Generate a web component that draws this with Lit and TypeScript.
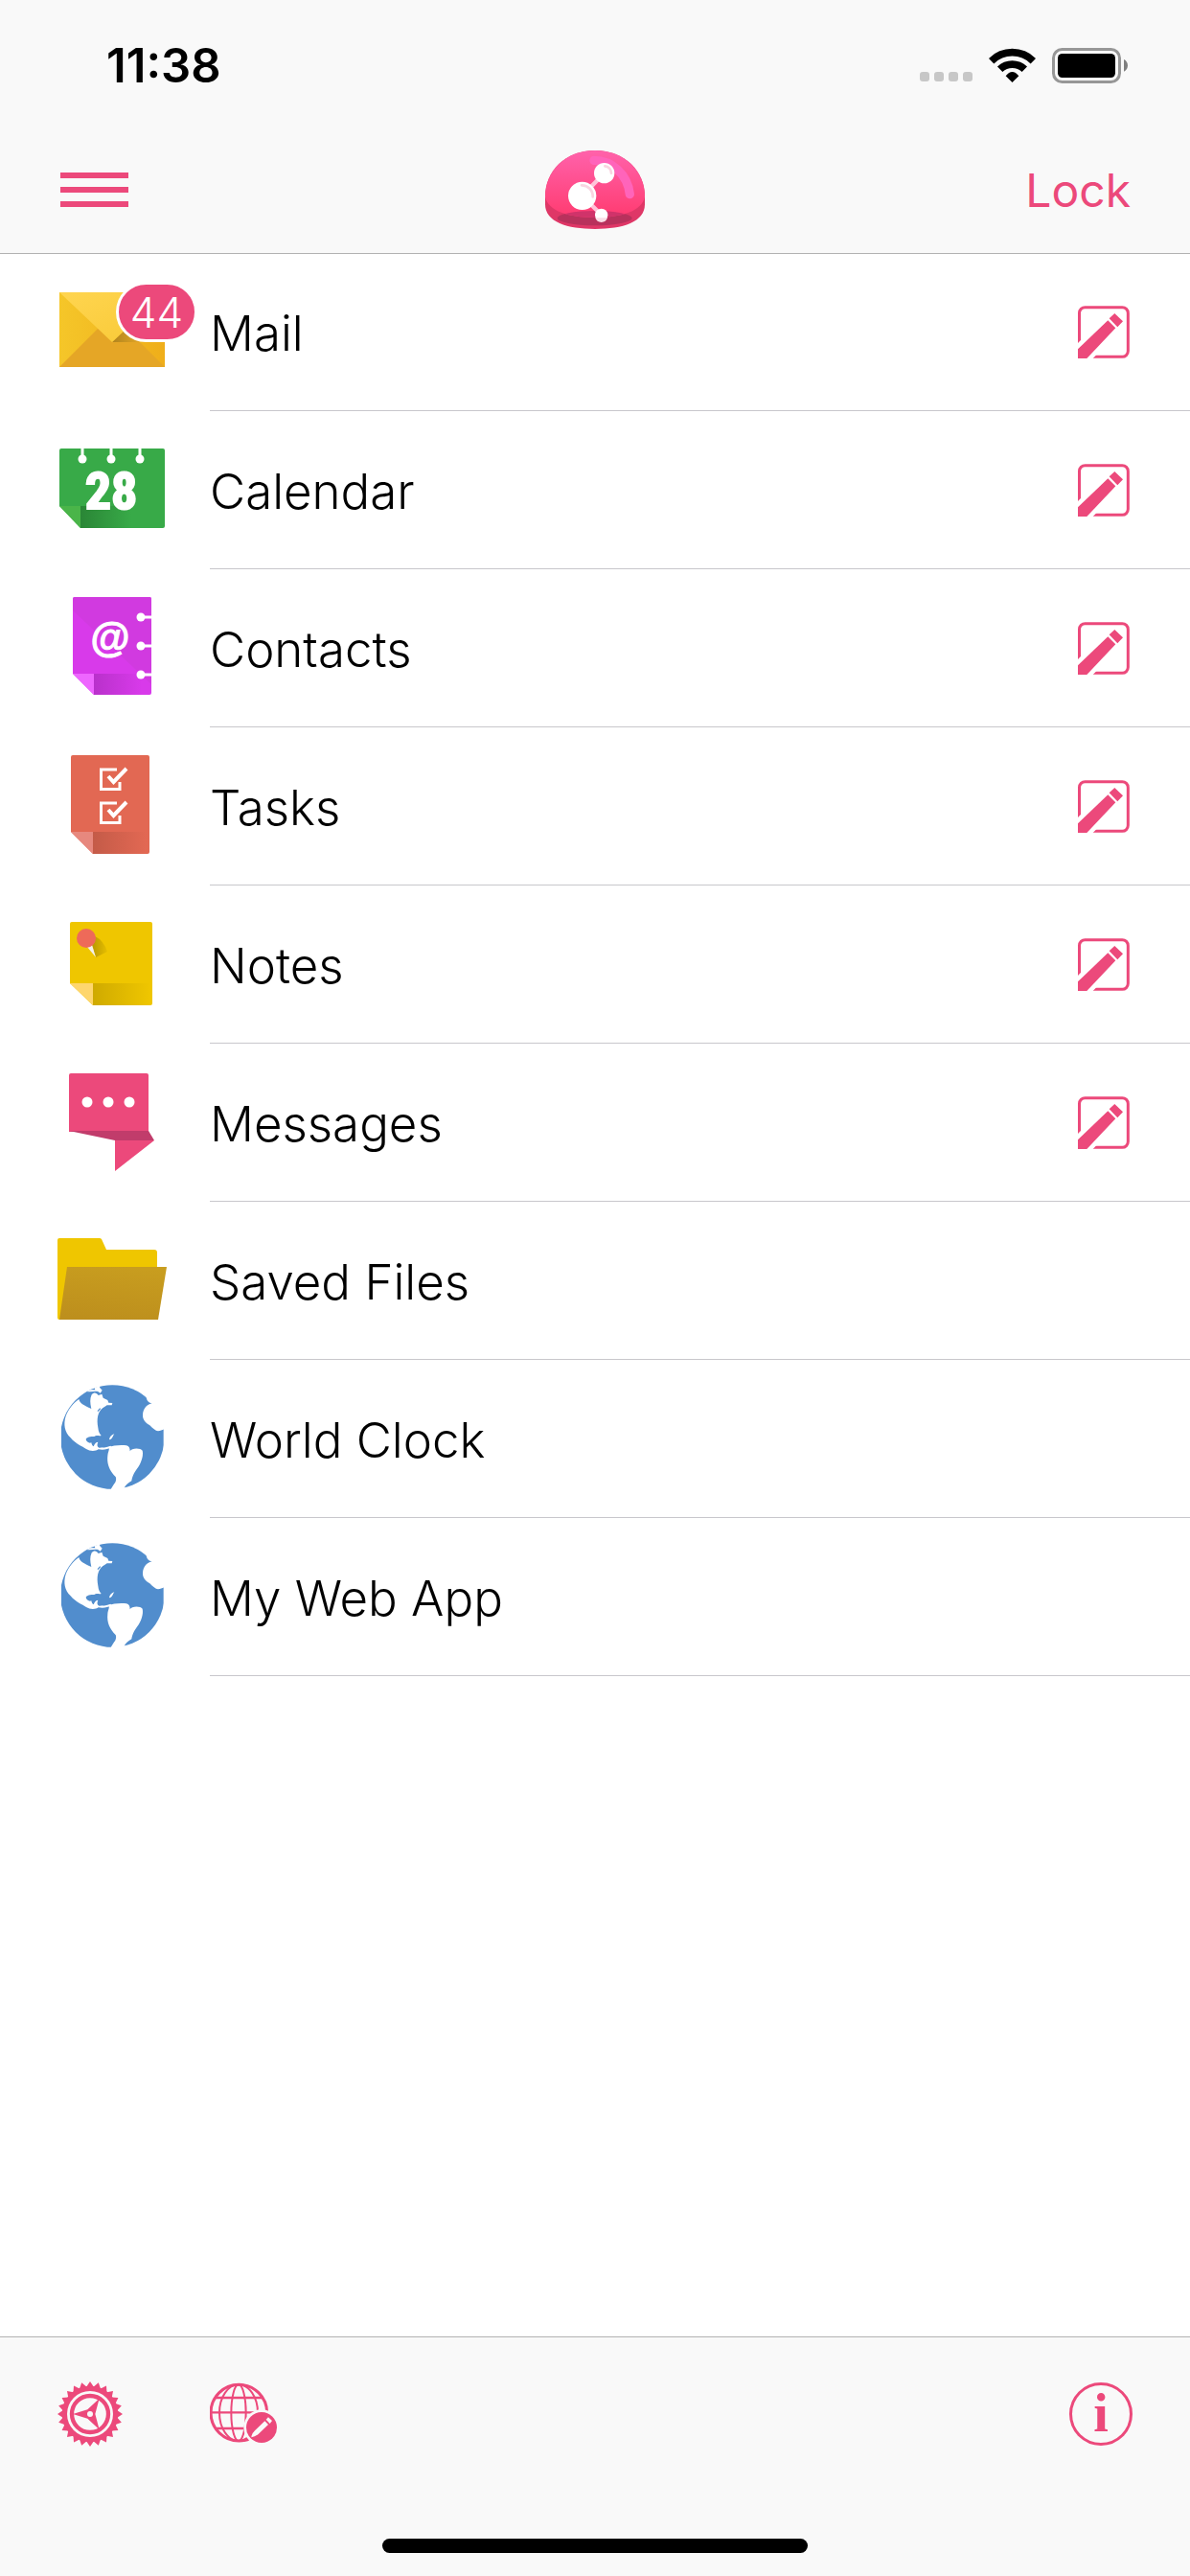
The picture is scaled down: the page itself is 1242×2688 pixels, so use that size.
import { LitElement, html, css, svg, nothing } from 'lit';
import type { SVGTemplateResult } from 'lit';
import { customElement, property } from 'lit/decorators.js';

interface AppEntry {
  id: string;
  label: string;
  icon: string;
  badge?: number;
  compose?: boolean;
}

const APPS: AppEntry[] = [
  { id: 'mail', label: 'Mail', icon: 'mail', badge: 44, compose: true },
  { id: 'calendar', label: 'Calendar', icon: 'calendar', compose: true },
  { id: 'contacts', label: 'Contacts', icon: 'contacts', compose: true },
  { id: 'tasks', label: 'Tasks', icon: 'tasks', compose: true },
  { id: 'notes', label: 'Notes', icon: 'notes', compose: true },
  { id: 'messages', label: 'Messages', icon: 'messages', compose: true },
  { id: 'files', label: 'Saved Files', icon: 'files' },
  { id: 'clock', label: 'World Clock', icon: 'globe' },
  { id: 'webapp', label: 'My Web App', icon: 'globe' },
];

const checkbox = svg`
  <path d="M64 22H47.5V42.5H67V35" fill="none" stroke="#fff" stroke-width="3"/>
  <path d="M55 29l5.5 6L74 21" fill="none" stroke="#fff" stroke-width="4"/>
`;

// all drawn on a 120x120 canvas
const ICONS: Record<string, SVGTemplateResult> = {
  mail: svg`
    <defs>
      <linearGradient id="side"><stop stop-color="#f5c629"/><stop offset="1" stop-color="#efae1a"/></linearGradient>
      <linearGradient id="flap" x2="1" y2="1"><stop stop-color="#ffd550"/><stop offset="1" stop-color="#f8c935"/></linearGradient>
      <linearGradient id="fold"><stop stop-color="#b0841d"/><stop offset="1" stop-color="#e2a526"/></linearGradient>
    </defs>
    <path d="M4 19h110v78H4z" fill="url(#side)"/>
    <path d="M4 97l55-55 55 55z" fill="#e5a626"/>
    <path d="M59 71l16-15 13 15z" fill="url(#fold)"/>
    <path d="M4 19h110L59 71z" fill="url(#flap)"/>
  `,
  calendar: svg`
    <defs>
      <linearGradient id="shade"><stop stop-color="#2a8636"/><stop offset="1" stop-color="#38aa48"/></linearGradient>
    </defs>
    <path d="M6 17h106a2 2 0 0 1 2 2v79a2 2 0 0 1-2 2H26L4 77V19a2 2 0 0 1 2-2z" fill="#38aa48"/>
    <path d="M26 77h53v23H26z" fill="url(#shade)"/>
    <path d="M4 77h22v23z" fill="#4ab549"/>
    <path d="M28 17v10M58 17v10M88 17v10" stroke="#fff" stroke-width="3"/>
    <g fill="#fff"><circle cx="28" cy="28" r="4.5"/><circle cx="58" cy="28" r="4.5"/><circle cx="88" cy="28" r="4.5"/></g>
    <text class="day" x="58" y="80" text-anchor="middle" fill="#fff" stroke="#fff" stroke-width="2">28</text>
  `,
  contacts: svg`
    <defs>
      <linearGradient id="shade"><stop stop-color="#b931cb"/><stop offset="1" stop-color="#d83aea"/></linearGradient>
    </defs>
    <path d="M20 7h78a2 2 0 0 1 2 2v98a2 2 0 0 1-2 2H40L18 87V9a2 2 0 0 1 2-2z" fill="#d83aea"/>
    <path d="M20 7h78a2 2 0 0 1 2 2v89L18 21V9a2 2 0 0 1 2-2z" fill="#d13ae0"/>
    <path d="M40 87h50v22H40z" fill="url(#shade)"/>
    <path d="M18 87h22v22z" fill="#ee66ff"/>
    <path d="M89 28h11M89 58h11M89 88h11" stroke="#fff" stroke-width="3"/>
    <g fill="#fff"><circle cx="89" cy="28" r="4.5"/><circle cx="89" cy="58" r="4.5"/><circle cx="89" cy="88" r="4.5"/></g>
    <text class="at" x="57" y="64" text-anchor="middle" fill="#fff" stroke="#fff" stroke-width="1">@</text>
  `,
  tasks: svg`
    <defs>
      <linearGradient id="shade"><stop stop-color="#c45b48"/><stop offset="1" stop-color="#e26853"/></linearGradient>
    </defs>
    <path d="M18 7h78a2 2 0 0 1 2 2v99a2 2 0 0 1-2 2H39L16 87V9a2 2 0 0 1 2-2z" fill="#e26853"/>
    <path d="M39 87h56v23H39z" fill="url(#shade)"/>
    <path d="M16 87h23v23z" fill="#e7887e"/>
    ${checkbox}
    <g transform="translate(0 35)">${checkbox}</g>
  `,
  notes: svg`
    <defs>
      <linearGradient id="shade"><stop stop-color="#cfaa00"/><stop offset="1" stop-color="#efc600"/></linearGradient>
      <linearGradient id="cast"><stop stop-color="#b89800"/><stop offset="1" stop-color="#e6be00"/></linearGradient>
    </defs>
    <path d="M17 16h82a2 2 0 0 1 2 2v83a2 2 0 0 1-2 2H39L15 80V18a2 2 0 0 1 2-2z" fill="#efc600"/>
    <path d="M39 80h60v23H39z" fill="url(#shade)"/>
    <path d="M15 80h24v23z" fill="#fed66e"/>
    <path d="M41 31q9 4 13 16l-12 6-4-13z" fill="url(#cast)"/>
    <path d="M33 42l5-2 4 13z" fill="#f4f0ea"/>
    <circle cx="32" cy="33" r="10" fill="#ee6a59"/>
  `,
  messages: svg`
    <path d="M16 9h79a2 2 0 0 1 2 2v59H14V11a2 2 0 0 1 2-2z" fill="#ec497b"/>
    <path d="M62 79h41l-41 32z" fill="#ec497b"/>
    <path d="M14 69h83l6 10H62z" fill="#c13c6b"/>
    <g fill="#fff"><circle cx="33" cy="39" r="5.5"/><circle cx="55" cy="39" r="5.5"/><circle cx="77" cy="39" r="5.5"/></g>
  `,
  files: svg`
    <defs>
      <linearGradient id="front" x1=".6" y1="0" x2=".4" y2="1"><stop stop-color="#c89d1f"/><stop offset="1" stop-color="#bd8f1d"/></linearGradient>
    </defs>
    <path d="M4 16h42q1 0 2 1l5 11h50q3 0 3 3v30L20 101H4q-2 0-2-2V18q0-2 2-2z" fill="#efc600"/>
    <path d="M12 46h104l-9 55H4z" fill="url(#front)"/>
  `,
  globe: svg`
    <clipPath id="disc"><path d="M18 0h320v360H18z"/></clipPath>
    <g transform="scale(.333333)">
      <circle cx="178" cy="175.5" r="163" fill="#518dcd" clip-path="url(#disc)"/>
      <g fill="#fff">
        <path d="M73 57C75 68 88 77 112 87C108 70 107 56 113 43C120 35 128 36 134 45L145 41L149 53L163 60L166 68L178 69L176 76L161 76L148 85C132 96 128 120 133 146C134 158 138 165 143 171C134 173 129 168 121 174C109 174 97 175 95 183C97 191 105 196 112 193C113 200 116 204 119 205C122 197 127 191 133 191C129 200 130 206 136 209C146 208 160 209 172 203L176 208C162 215 148 216 134 214C126 220 108 221 96 213C84 205 62 197 47 178C28 160 24 135 32 110C40 88 55 70 73 57Z"/>
        <path d="M166 208C180 202 200 200 222 202C230 204 233 210 233 220C238 209 266 209 272 218C276 235 267 256 260 268C250 282 240 296 238 313C229 318 218 326 215 335L212 345H170C176 333 181 325 187 317C190 310 190 304 188 300C170 282 160 262 163 234C164 222 170 215 166 208Z"/>
        <path d="M284 52C286 60 289 68 302 70C289 73 274 84 273 106C272 121 282 132 295 139C304 149 313 156 321 157C327 157 333 155 345 148V95L310 50Z"/>
        <path d="M122 22L137 15L139 22L146 29L140 38L134 34C126 30 112 35 98 33L110 28L124 28Z"/>
        <path d="M168 183C170 174 176 168 184 166C179 172 179 180 171 184Z"/>
      </g>
      <path d="M132 95L140 86M146 90L152 84" stroke="#518dcd" stroke-width="4"/>
      <path d="M120 178C134 172 148 178 162 180C156 188 146 192 124 190Z" fill="#518dcd"/>
    </g>
  `,
};

@customElement('app-icon')
export class AppIcon extends LitElement {
  static styles = css`
    :host {
      display: block;
      width: 120px;
      height: 120px;
    }

    svg {
      display: block;
    }

    .day {
      font: bold 54px 'Liberation Sans Narrow', 'Roboto Condensed', 'Liberation Sans', sans-serif;
    }

    .at {
      font: bold 42px 'Liberation Sans', sans-serif;
    }
  `;

  @property() name = '';

  render() {
    return html`<svg width="120" height="120" viewBox="0 0 120 120" aria-hidden="true">${ICONS[this.name]}</svg>`;
  }
}

@customElement('status-bar')
export class StatusBar extends LitElement {
  static styles = css`
    :host {
      display: flex;
      align-items: center;
      justify-content: space-between;
      height: 132px;
      padding: 4px 65px 0 111px;
      box-sizing: border-box;
    }

    time {
      font-size: 49px;
      font-weight: 600;
      color: #000;
    }

    .indicators {
      display: flex;
      align-items: center;
      gap: 17px;
    }

    svg {
      display: block;
    }
  `;

  render() {
    return html`
      <time>11:38</time>
      <div class="indicators">
        <svg width="55" height="36" viewBox="0 0 55 36" fill="#c7c7c7">
          ${[0, 15, 30, 45].map((x) => svg`<rect x=${x} y="25" width="10" height="10" rx="3"/>`)}
        </svg>
        <svg width="49" height="36" viewBox="336 147 147 108" fill="none" stroke="#000">
          <path d="M344 188A93 93 0 0 1 475 188" stroke-width="23"/>
          <path d="M371 214A55 55 0 0 1 448 214" stroke-width="23"/>
          <path d="M409.5 255L389 235Q409.5 209 430 235Z" fill="#000" stroke="none"/>
        </svg>
        <svg width="79" height="37" viewBox="534 147 237 111">
          <rect x="538.5" y="151.5" width="207" height="102" rx="27" fill="none" stroke="#979797" stroke-width="9"/>
          <rect x="552" y="165" width="180" height="75" rx="14"/>
          <path d="M759 183C775 190 775 214 759 221Z" fill="#7f7f7f"/>
        </svg>
      </div>
    `;
  }
}

@customElement('app-row')
export class AppRow extends LitElement {
  static styles = css`
    :host {
      display: flex;
      gap: 41px;
      padding-left: 58px;
    }

    .icon {
      position: relative;
      padding-top: 22px;
    }

    .badge {
      position: absolute;
      top: 30px;
      left: 63px;
      display: flex;
      align-items: center;
      justify-content: center;
      width: 79px;
      height: 57px;
      border: 3px solid #fff;
      border-radius: 32px;
      background: var(--accent);
      color: #fff;
      font-size: 44px;
      font-weight: 300;
    }

    .body {
      display: flex;
      flex: 1;
      align-items: center;
      height: 164px;
      padding-right: 63px;
      border-bottom: 1px solid #c8c7cc;
    }

    a {
      flex: 1;
      padding-top: 4px;
      color: #000;
      font-size: 51px;
      font-weight: 300;
      line-height: 160px;
      text-decoration: none;
    }

    button {
      padding: 0;
      border: 0;
      background: none;
      cursor: pointer;
    }

    svg {
      display: block;
    }
  `;

  @property({ attribute: false }) entry!: AppEntry;

  render() {
    const { id, label, icon, badge, compose } = this.entry;
    return html`
      <div class="icon">
        <app-icon name=${icon}></app-icon>
        ${badge ? html`<span class="badge">${badge}</span>` : nothing}
      </div>
      <div class="body">
        <a href="#${id}">${label}</a>
        ${compose
          ? html`
              <button aria-label="New in ${label}">
                <svg width="54" height="55" viewBox="615 954 162 165" fill="#ec497b">
                  <path d="M619.5 1072V977a18 18 0 0 1 18-18H754a18 18 0 0 1 18 18V1096a18 18 0 0 1-18 18H660" fill="none" stroke="#ec497b" stroke-width="9"/>
                  <path d="M612 1074L632 1054V1080H612ZM658 1123L676 1105H656Z" fill="#fff"/>
                  <path d="M615 1090L709 1000L733 1024L643 1119H615Z"/>
                  <path d="M713 994L730 978L756 1003L739 1021Z"/>
                </svg>
              </button>
            `
          : nothing}
      </div>
    `;
  }
}

// sprocket outline: 24 teeth around (120, 117)
const gearPoints = Array.from({ length: 48 }, (_, i) => {
  const r = i % 2 ? 86 : 102;
  const a = (i * Math.PI) / 24;
  return `${(120 + r * Math.sin(a)).toFixed(1)},${(117 - r * Math.cos(a)).toFixed(1)}`;
}).join(' ');

@customElement('app-root')
export class AppRoot extends LitElement {
  static styles = css`
    :host {
      --accent: #ec497b;
      --bar: #f9f9f9;
      display: flex;
      flex-direction: column;
      min-height: 100vh;
      background: #fff;
      font-family: Inter, 'Liberation Sans', sans-serif;
    }

    header {
      background: var(--bar);
      border-bottom: 1px solid #b2b2b2;
    }

    nav {
      display: grid;
      grid-template-columns: 1fr auto 1fr;
      align-items: center;
      height: 132px;
      padding: 0 62px;
    }

    button {
      padding: 0;
      border: 0;
      background: none;
      color: var(--accent);
      font: inherit;
      cursor: pointer;
    }

    svg {
      display: block;
    }

    .menu {
      justify-self: start;
    }

    .lock {
      justify-self: end;
      font-size: 48px;
    }

    main {
      flex: 1;
    }

    ul {
      margin: -1px 0 0;
      padding: 0;
      list-style: none;
    }

    footer {
      display: flex;
      flex-direction: column;
      justify-content: space-between;
      align-items: center;
      height: 250px;
      padding: 46px 0 24px;
      box-sizing: border-box;
      border-top: 1px solid #b2b2b2;
      background: var(--bar);
    }

    .toolbar {
      display: flex;
      align-items: center;
      gap: 91px;
      width: 100%;
      padding: 0 60px;
      box-sizing: border-box;
    }

    .info {
      margin-left: auto;
    }

    .info text {
      font: bold 56px 'Liberation Serif', serif;
    }

    .home {
      width: 444px;
      height: 15px;
      border-radius: 8px;
      background: #000;
    }
  `;

  private renderLogo() {
    return html`
      <svg width="104" height="82" viewBox="207 111 312 246" role="img" aria-label="Home">
        <defs>
          <linearGradient id="dome" x2="0" y2="1"><stop stop-color="#ff62ab"/><stop offset="1" stop-color="#ff3b70"/></linearGradient>
          <clipPath id="top"><path d="M207 256C207 175 270 111 363 111S519 175 519 256C510 300 450 321 363 321S216 300 207 256Z"/></clipPath>
        </defs>
        <path d="M207 256C207 175 270 111 363 111S519 175 519 256V280C519 335 450 357 363 357S207 335 207 280Z" fill="#df3767"/>
        <ellipse cx="362" cy="323" rx="117" ry="23" fill="#b8315c"/>
        <g clip-path="url(#top)">
          <path d="M207 111h312v210H207z" fill="url(#dome)"/>
          <ellipse cx="362" cy="323" rx="117" ry="23" fill="#d0336a"/>
        </g>
        <path d="M360 142C415 142 465 185 472 248" fill="none" stroke="#ff64ba" stroke-width="28" stroke-linecap="round"/>
        <path d="M323 253L392 182M323 253L383 313" stroke="#ffc3d8" stroke-width="13"/>
        <g fill="#fff"><circle cx="392" cy="182" r="32"/><circle cx="323" cy="253" r="44"/><circle cx="383" cy="313" r="20"/></g>
        <path d="M364 322a20 20 0 0 0 38 0z" fill="#fbdde6"/>
        <path d="M321 220A34 34 0 0 1 356 256M394 160A22 22 0 0 1 414 182" fill="none" stroke="#f9d5e1" stroke-width="8" stroke-linecap="round"/>
      </svg>
    `;
  }

  private renderFooter() {
    return html`
      <div class="toolbar">
        <button aria-label="Settings">
          <svg width="68" height="68" viewBox="18 15 204 204" fill="#ec497b">
            <polygon points=${gearPoints}/>
            <circle cx="120" cy="117" r="88"/>
            <circle cx="120" cy="117" r="72" fill="#f9f9f9"/>
            <circle cx="120" cy="117" r="57" fill="none" stroke="#ec497b" stroke-width="13"/>
            <path d="M66 117L112 103L149 68L136 117L149 166L112 131Z"/>
            <circle cx="120" cy="117" r="9" fill="#f9f9f9"/>
          </svg>
        </button>
        <button aria-label="Edit web apps">
          <svg width="70" height="68" viewBox="15 15 210 204" fill="none" stroke="#ec497b" stroke-width="7">
            <circle cx="106" cy="113" r="88" stroke-width="9"/>
            <ellipse cx="105" cy="113" rx="23" ry="88" stroke-width="6"/>
            <ellipse cx="105" cy="113" rx="60" ry="88" stroke-width="6"/>
            <path d="M32 66H180M18 112H190M32 162H180"/>
            <circle cx="177" cy="159" r="56" fill="#f9f9f9" stroke="none"/>
            <circle cx="177" cy="159" r="48" fill="#ec497b" stroke="none"/>
            <path d="M145 190Q146 178 156 169L187 139L198 150L166 181Q155 188 145 190ZM191 134L198 127L210 138L203 147Z" fill="#f9f9f9" stroke="none"/>
          </svg>
        </button>
        <button class="info" aria-label="About">
          <svg width="66" height="66" viewBox="0 0 66 66">
            <circle cx="33" cy="33" r="31.5" fill="none" stroke="#ec497b" stroke-width="3"/>
            <text x="33" y="51" text-anchor="middle" fill="#ec497b">i</text>
          </svg>
        </button>
      </div>
      <div class="home"></div>
    `;
  }

  render() {
    return html`
      <header>
        <status-bar></status-bar>
        <nav>
          <button class="menu" aria-label="Menu">
            <svg width="72" height="36" viewBox="0 0 72 36" fill="#ec497b">
              <path d="M1 0h71v6H1zM1 15h71v6H1zM1 30h71v6H1z"/>
            </svg>
          </button>
          ${this.renderLogo()}
          <button class="lock">Lock</button>
        </nav>
      </header>
      <main>
        <ul>
          ${APPS.map((entry) => html`<li><app-row .entry=${entry}></app-row></li>`)}
        </ul>
      </main>
      <footer>${this.renderFooter()}</footer>
    `;
  }
}
